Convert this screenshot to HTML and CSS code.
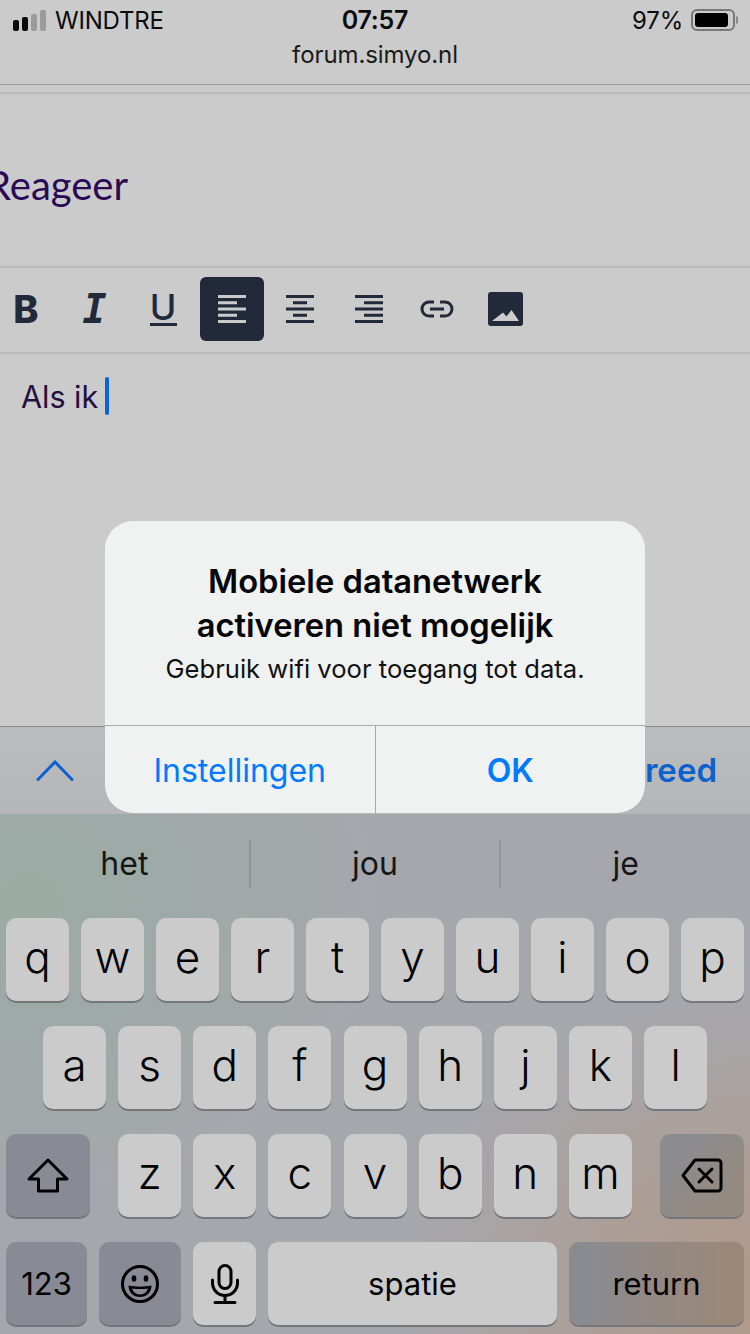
FILE: index.html
```html
<!DOCTYPE html>
<html lang="nl">
<head>
    <meta charset="UTF-8">
    <meta name="viewport" content="width=device-width, initial-scale=1.0">
    <title>Reageer</title>
    <link rel="stylesheet" href="styles.css">
</head>
<body>
    <div class="phone">
        <div class="status">
            <div class="status-left">
                <div class="signal">
                    <span class="bar bar-1"></span>
                    <span class="bar bar-2"></span>
                    <span class="bar bar-3 off"></span>
                    <span class="bar bar-4 off"></span>
                </div>
                <span>WINDTRE</span>
            </div>
            <div class="time">07:57</div>
            <div class="status-right">
                <span>97%</span>
                <div class="battery"><div class="battery-fill"></div></div>
                <div class="battery-nub"></div>
            </div>
        </div>
        <div class="url">forum.simyo.nl</div>
        <div class="spacer-line"></div>

        <div class="heading"><h1>Reageer</h1></div>

        <div class="toolbar">
            <button class="tool tool-b">B</button>
            <button class="tool tool-i">I</button>
            <button class="tool"><span class="tool-u">U</span></button>
            <button class="tool active">
                <svg width="28" height="28" viewBox="0 0 28 28"><path d="M0 1.5h28M0 7.7h19M0 14h28M0 20.3h19M0 26.5h28"/></svg>
            </button>
            <button class="tool">
                <svg width="28" height="28" viewBox="0 0 28 28"><path d="M0 1.5h28M7 7.7h14M0 14h28M7 20.3h14M0 26.5h28"/></svg>
            </button>
            <button class="tool">
                <svg width="28" height="28" viewBox="0 0 28 28"><path d="M0 1.5h28M9 7.7h19M0 14h28M9 20.3h19M0 26.5h28"/></svg>
            </button>
            <button class="tool">
                <svg width="34" height="18" viewBox="0 0 34 18"><path d="M14 2H9a7 7 0 0 0 0 14h5M20 2h5a7 7 0 0 1 0 14h-5M10 9h14"/></svg>
            </button>
            <button class="tool">
                <svg width="35" height="34" viewBox="0 0 35 34"><path class="solid" fill-rule="evenodd" d="M3 0h29a3 3 0 0 1 3 3v28a3 3 0 0 1-3 3H3a3 3 0 0 1-3-3V3a3 3 0 0 1 3-3zM4 29h27l-7.500-11-5 6.500-3.500-4z"/></svg>
            </button>
        </div>

        <div class="editor">
            <span class="editor-text">Als ik</span><span class="caret"></span>
        </div>

        <div class="accessory">
            <svg class="chevron" width="38" height="21" viewBox="0 0 38 21"><path d="M2 19.500L19 2l17 17.500"/></svg>
            <span class="done">Gereed</span>
        </div>

        <div class="keyboard">
            <div class="suggestions">
                <div class="suggestion">het</div>
                <div class="suggestion">jou</div>
                <div class="suggestion">je</div>
            </div>
            <div class="row">
                <div class="key">q</div><div class="key">w</div><div class="key">e</div><div class="key">r</div><div class="key">t</div><div class="key">y</div><div class="key">u</div><div class="key">i</div><div class="key">o</div><div class="key">p</div>
            </div>
            <div class="row row-2">
                <div class="key">a</div><div class="key">s</div><div class="key">d</div><div class="key">f</div><div class="key">g</div><div class="key">h</div><div class="key">j</div><div class="key">k</div><div class="key">l</div>
            </div>
            <div class="row row-3">
                <div class="key key-fn key-shift">
                    <svg width="42" height="35" viewBox="0 0 42 35"><path d="M21 2L40 21H30.500V33H11.500V21H2z"/></svg>
                </div>
                <div class="letters">
                    <div class="key">z</div><div class="key">x</div><div class="key">c</div><div class="key">v</div><div class="key">b</div><div class="key">n</div><div class="key">m</div>
                </div>
                <div class="key key-fn key-back">
                    <svg width="42" height="35" viewBox="0 0 42 35"><path d="M14 2H37a3 3 0 0 1 3 3V30a3 3 0 0 1-3 3H14L2 17.500zM18 11l13 13M31 11L18 24"/></svg>
                </div>
            </div>
            <div class="row row-4">
                <div class="key key-fn key-123 key-small">123</div>
                <div class="key key-fn key-emoji">
                    <svg width="38" height="38" viewBox="0 0 38 38">
                        <circle cx="19" cy="19" r="17.500"/>
                        <ellipse class="solid" cx="13" cy="13.500" rx="2.300" ry="3.200"/>
                        <ellipse class="solid" cx="25" cy="13.500" rx="2.300" ry="3.200"/>
                        <path class="solid" d="M7.500 20.500c7 1.500 16 1.500 23 0 0 7-5 11.500-11.500 11.500S7.500 27.500 7.500 20.500zM11 23.500c1.500 4 4.500 6 8 6s6.500-2 8-6c-5 .8-11 .8-16 0z" fill-rule="evenodd"/>
                    </svg>
                </div>
                <div class="key key-mic">
                    <svg width="28" height="40" viewBox="0 0 28 40">
                        <rect x="8" y="1.500" width="12" height="23" rx="6"/>
                        <path d="M1.500 16v3a12.500 12.500 0 0 0 25 0v-3M14 31.500V38M4 38.500h20"/>
                    </svg>
                </div>
                <div class="key key-space key-small">spatie</div>
                <div class="key key-fn key-return key-small">return</div>
            </div>
        </div>

        <div class="dialog">
            <div class="dialog-body">
                <div class="dialog-title">Mobiele datanetwerk<br>activeren niet mogelijk</div>
                <div class="dialog-text">Gebruik wifi voor toegang tot data.</div>
            </div>
            <div class="dialog-buttons">
                <div class="dialog-btn">Instellingen</div>
                <div class="dialog-btn dialog-ok">OK</div>
            </div>
        </div>
    </div>
</body>
</html>
```
FILE: styles.css
```css
html, body {
    margin: 0;
    padding: 0;
}
body {
    font-family: Inter, "Liberation Sans", sans-serif;
    background: #cbcbcb;
}
.phone {
    position: relative;
    width: 750px;
    height: 1334px;
    display: flex;
    flex-direction: column;
    overflow: hidden;
    background: #cbcbcb;
    color: #0b0b0b;
}

/* barra de estado */
.status {
    height: 40px;
    display: grid;
    grid-template-columns: 1fr auto 1fr;
    align-items: center;
    font-size: 24px;
    letter-spacing: -0.2px;
}
.status-left {
    display: flex;
    align-items: center;
    gap: 9px;
    padding-left: 13px;
}
.signal {
    display: flex;
    align-items: flex-end;
    gap: 3px;
    height: 21px;
}
.bar {
    width: 6px;
    border-radius: 2px;
    background: #0a0a0a;
}
.bar.off {
    background: #9b9b9b;
}
.bar-1 { height: 11px; }
.bar-2 { height: 14px; }
.bar-3 { height: 17px; }
.bar-4 { height: 21px; }
.time {
    font-weight: 600;
    font-size: 25px;
}
.status-right {
    display: flex;
    align-items: center;
    justify-content: flex-end;
    padding-right: 12px;
}
.battery {
    width: 44px;
    height: 22px;
    box-sizing: border-box;
    margin-left: 8px;
    padding: 2px;
    border: 2px solid #787878;
    border-radius: 6px;
}
.battery-fill {
    width: 92%;
    height: 100%;
    background: #000;
    border-radius: 3px;
}
.battery-nub {
    width: 2px;
    height: 8px;
    margin-left: 1px;
    background: #8a8a8a;
    border-radius: 0 2px 2px 0;
}
.url {
    height: 45px;
    box-sizing: border-box;
    line-height: 30px;
    text-align: center;
    font-size: 24px;
    letter-spacing: -0.1px;
    color: #1a1a1a;
    border-bottom: 1px solid #9c9c9c;
}
.spacer-line {
    height: 7px;
    border-bottom: 2px solid #bababa;
}

.heading {
    height: 174px;
    box-sizing: border-box;
    border-bottom: 2px solid #bababa;
}
.heading h1 {
    margin: 63px 0 0 -14px;
    font-family: Lato, sans-serif;
    font-weight: 400;
    font-size: 40px;
    line-height: 56px;
    color: #2a0a55;
}

/* barra del editor */
.toolbar {
    height: 86px;
    box-sizing: border-box;
    display: flex;
    align-items: flex-start;
    gap: 4.5px;
    padding: 9px 0 0;
    margin-left: -6px;
    border-bottom: 2px solid #bababa;
}
.tool {
    flex: none;
    width: 64px;
    height: 64px;
    display: flex;
    align-items: center;
    justify-content: center;
    padding: 0;
    border: none;
    border-radius: 6px;
    background: none;
    color: #22293a;
}
.tool svg {
    fill: none;
    stroke: #22293a;
    stroke-width: 3px;
}
.tool svg .solid {
    fill: #22293a;
    stroke: none;
}
.tool.active {
    background: #22293a;
}
.tool.active svg {
    stroke: #cbcbcb;
}
.tool-b {
    font-family: Inter, sans-serif;
    font-weight: 800;
    font-size: 38px;
}
.tool-i {
    font-family: "DejaVu Sans Mono", monospace;
    font-weight: 700;
    font-style: italic;
    font-size: 40px;
}
.tool-u {
    display: block;
    width: 27px;
    font-family: Inter, sans-serif;
    font-weight: 500;
    font-size: 36px;
    line-height: 31px;
    text-align: center;
    border-bottom: 3px solid #22293a;
}

.editor {
    flex: 1;
    display: flex;
    align-items: flex-start;
    padding: 23px 0 0 21px;
    color: #24103f;
}
.editor-text {
    font-size: 30.500px;
    line-height: 40px;
}
.caret {
    width: 4px;
    height: 38px;
    margin-left: 7px;
    border-radius: 2px;
    background: #0a64d6;
}

.accessory {
    height: 88px;
    box-sizing: border-box;
    display: flex;
    align-items: center;
    justify-content: space-between;
    padding: 0 33px 0 36px;
    background: linear-gradient(#bbbcbd, #b4b6b7);
    border-top: 1px solid #8e8e8e;
}
.chevron {
    fill: none;
    stroke: #0b62cf;
    stroke-width: 3px;
    stroke-linecap: round;
}
.done {
    margin-bottom: 2px;
    font-size: 33px;
    font-weight: 600;
    color: #0b62cf;
}

/* teclado */
.keyboard {
    flex: none;
    height: 520px;
    box-sizing: border-box;
    display: flex;
    flex-direction: column;
    gap: 25px;
    background:
        radial-gradient(380px 320px at 30px 900px, rgba(150, 172, 160, 0.75), rgba(150, 172, 160, 0) 100%) no-repeat,
        radial-gradient(360px 300px at 760px 1290px, rgba(178, 150, 130, 0.9), rgba(178, 150, 130, 0) 100%) no-repeat,
        #a6a7ad;
    background-attachment: fixed;
}
.suggestions {
    height: 74px;
    margin-bottom: 5px;
    display: flex;
    align-items: flex-end;
    color: #161616;
    font-size: 32px;
}
.suggestion {
    flex: 1;
    height: 48px;
    box-sizing: border-box;
    line-height: 48px;
    text-align: center;
    border-right: 2px solid #93949a;
}
.suggestion:last-child {
    border-right: none;
}
.row {
    display: flex;
    gap: 12px;
    padding: 0 6px;
}
.row-2 {
    gap: 12.150px;
    padding-left: 43px;
}
.row-3 {
    justify-content: space-between;
}
.letters {
    display: flex;
    gap: 12.150px;
}
.key {
    flex: none;
    width: 63px;
    height: 83px;
    box-sizing: border-box;
    padding-bottom: 5px;
    display: flex;
    align-items: center;
    justify-content: center;
    border-radius: 10px;
    background: #cbcbcb;
    box-shadow: 0 2px 0 #75767b;
    color: #000;
    font-size: 44px;
    font-weight: 300;
}
.key svg {
    fill: none;
    stroke: #000;
    stroke-width: 3px;
    stroke-linejoin: round;
    stroke-linecap: round;
}
.key svg .solid {
    fill: #000;
    stroke: none;
}
.key-small {
    padding-bottom: 0;
    font-size: 31px;
    font-weight: 400;
}
.key-fn,
.key-mic {
    padding-bottom: 0;
}
.key-fn {
    background: #888b96;
}
.key-shift { width: 84px; }
.key-back {
    width: 84px;
    background: linear-gradient(135deg, #8b8b90 20%, #958a80 80%);
}
.key-123 { width: 81px; }
.key-emoji { width: 82px; }
.key-space { width: 289px; }
.key-return {
    width: 175px;
    background: linear-gradient(90deg, #8a8b90 10%, #9b8878 90%);
}

/* dialogo */
.dialog {
    position: absolute;
    top: 521px;
    left: 105px;
    width: 540px;
    height: 292px;
    display: flex;
    flex-direction: column;
    border-radius: 28px;
    background: #f0f1f1;
    overflow: hidden;
}
.dialog-body {
    flex: 1;
    text-align: center;
    padding-top: 38px;
}
.dialog-title {
    font-size: 32.700px;
    line-height: 44px;
    font-weight: 600;
    color: #050505;
}
.dialog-text {
    margin-top: 2px;
    font-size: 25.600px;
    line-height: 40px;
    color: #111;
}
.dialog-buttons {
    height: 87px;
    display: flex;
    border-top: 1px solid #a9a9ab;
}
.dialog-btn {
    flex: 1;
    line-height: 90px;
    text-align: center;
    font-size: 32px;
    color: #007aff;
}
.dialog-ok {
    font-weight: 600;
    border-left: 1px solid #a9a9ab;
}
```
